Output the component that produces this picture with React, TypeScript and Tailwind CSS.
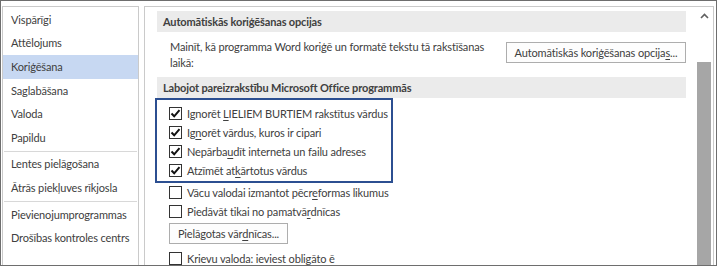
const navGroups = [
  ['Vispārīgi', 'Attēlojums', 'Koriģēšana', 'Saglabāšana', 'Valoda', 'Papildu'],
  ['Lentes pielāgošana', 'Ātrās piekļuves rīkjosla'],
  ['Pievienojumprogrammas', 'Drošības kontroles centrs'],
]

function Box({ checked }: { checked: boolean }) {
  return (
    <span className="flex h-[13px] w-[13px] shrink-0 items-center justify-center border border-[#333] bg-white">
      {checked && (
        <svg width="11" height="11" viewBox="0 0 11 11">
          <path d="M1.5 5.5 L4.2 8.3 L9.5 2.2" fill="none" stroke="#111" strokeWidth="2" />
        </svg>
      )}
    </span>
  )
}

function Row({ checked, children }: { checked: boolean; children: React.ReactNode }) {
  return (
    <div className="flex h-[19px] items-center gap-[5px] whitespace-nowrap">
      <Box checked={checked} />
      <span>{children}</span>
    </div>
  )
}

const U = ({ children }: { children: React.ReactNode }) => <span className="underline underline-offset-2">{children}</span>

export default function App() {
  return (
    <div
      className="h-[267px] w-[719px] bg-white text-[11px] leading-[16px] tracking-[-0.15px] text-[#404040]"
      style={{ fontFamily: '"Segoe UI", Lato, sans-serif' }}
    >
      <div className="flex h-[266px] w-[717px] overflow-hidden border border-[#6e6e6e] pt-[5px]">
        {/* left nav */}
        <div className="ml-[1px] w-[137px] shrink-0 border-l border-r border-t border-[#cacaca] pt-[1px]">
          {navGroups.map((group, gi) => (
            <div key={gi}>
              {gi > 0 && (
                <div className="py-[1px]">
                  <div className="mx-[1px] h-px bg-[#d8d8d8]" />
                </div>
              )}
              {group.map((item) => (
                <div
                  key={item}
                  className={`flex h-[23.6px] items-center pl-[8px] whitespace-nowrap ${item === 'Koriģēšana' ? 'bg-[#c7d8f2]' : ''}`}
                >
                  {item}
                </div>
              ))}
            </div>
          ))}
        </div>

        {/* right content panel */}
        <div className="ml-[5px] flex w-[570px] shrink-0 border-l border-r border-t border-[#cacaca]">
          <div className="w-[552px] shrink-0 pl-[12px] pr-[11px] pt-[4px]">
            <div className="flex h-[21px] items-center bg-[#ebebeb] pl-[6px] font-bold">Automātiskās koriģēšanas opcijas</div>

            <div className="flex items-start pl-[13px] pt-[7px]">
              <p className="whitespace-nowrap">
                Mainīt, kā programma Word koriģē un formatē tekstu tā rakstīšanas
                <br />
                laikā:
              </p>
              <button className="ml-auto mt-[3px] h-[21px] w-[180px] whitespace-nowrap border border-[#adadad] bg-[#fdfdfd] text-center">
                Automātiskās koriģēšanas opcija<U>s</U>...
              </button>
            </div>

            <div className="mt-[6px] flex h-[21px] items-center bg-[#ebebeb] pl-[6px] font-bold">
              Labojot pareizrakstību Microsoft Office programmās
            </div>

            <div className="-ml-[2px] w-[238px] border-2 border-[#2c4f91] pb-[1px] pl-[12px] pt-[4px]">
              <Row checked>
                Ignorēt <U>L</U>IELIEM BURTIEM rakstītus vārdus
              </Row>
              <Row checked>
                Ig<U>n</U>orēt vārdus, kuros ir cipari
              </Row>
              <Row checked>
                Nepārba<U>u</U>dīt interneta un failu adreses
              </Row>
              <Row checked>
                Atzīmēt at<U>k</U>ārtotus vārdus
              </Row>
            </div>

            <div className="pl-[12px]">
              <Row checked={false}>
                Vācu valodai izmantot pēcr<U>e</U>formas likumus
              </Row>
              <Row checked={false}>
                Piedāvāt tikai no pamatvā<U>r</U>dnīcas
              </Row>
              <button className="mb-[5px] mt-[2px] h-[21px] w-[119px] whitespace-nowrap border border-[#adadad] bg-[#fdfdfd] text-center">
                Pielāgotas vār<U>d</U>nīcas...
              </button>
              <Row checked={false}>
                Krievu valoda: <U>i</U>eviest obligāto ē
              </Row>
            </div>
          </div>

          {/* scrollbar */}
          <div className="flex w-[14px] shrink-0 flex-col">
            <div className="flex h-[55px] justify-center pt-[6px]">
              <svg width="9" height="6" viewBox="0 0 9 6">
                <path d="M1 5 L4.5 1.5 L8 5" fill="none" stroke="#606060" strokeWidth="1.6" />
              </svg>
            </div>
            <div className="flex-1 bg-[#a6a6a6]" />
          </div>
        </div>
      </div>
    </div>
  )
}
